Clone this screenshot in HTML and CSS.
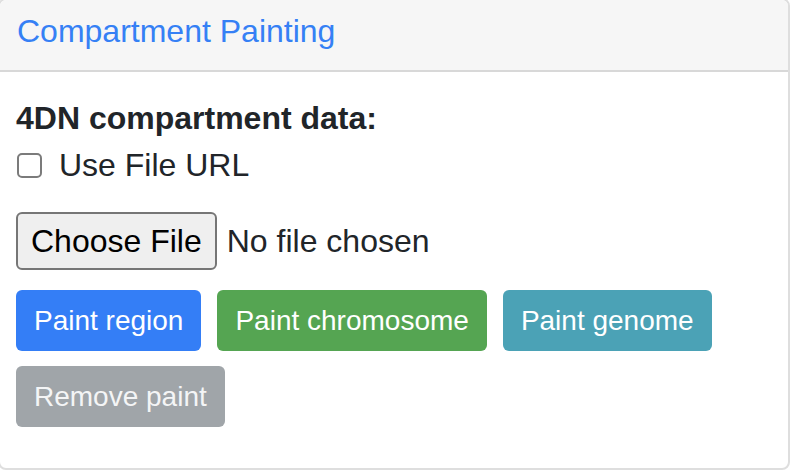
FILE: index.html
```html
<!DOCTYPE html>
<html lang="en">
<head>
<meta charset="utf-8">
<title>Compartment Painting</title>
<link rel="stylesheet" href="styles.css">
</head>
<body>
<div class="card">
  <div class="card-header">
    <h5 class="card-title">Compartment Painting</h5>
  </div>
  <div class="card-body">
    <div class="field-label">4DN compartment data:</div>
    <label class="check">
      <input type="checkbox" class="check-input">
      <span class="check-text">Use File URL</span>
    </label>
    <div class="file-row">
      <button type="button" class="file-btn">Choose File</button>
      <span class="file-status">No file chosen</span>
    </div>
    <div class="actions">
      <button type="button" class="btn btn-primary">Paint region</button>
      <button type="button" class="btn btn-success">Paint chromosome</button>
      <button type="button" class="btn btn-info">Paint genome</button>
      <button type="button" class="btn btn-secondary" disabled>Remove paint</button>
    </div>
  </div>
</div>
</body>
</html>
```

FILE: styles.css
```css
html, body {
  margin: 0;
  padding: 0;
}

body {
  width: 790px;
  height: 470px;
  overflow: hidden;
  background: #ffffff;
  font-family: "Liberation Sans", Arial, Helvetica, sans-serif;
  color: #212529;
}

.card {
  box-sizing: border-box;
  width: 792px;
  height: 472px;
  margin: -2px 0 0 -2px;
  border: 2px solid #dedede;
  border-radius: 8px;
  background: #ffffff;
  overflow: hidden;
}

.card-header {
  box-sizing: border-box;
  height: 72px;
  padding: 13px 16px 0 17px;
  background: #f6f6f6;
  border-bottom: 2px solid #d8d8d8;
}

.card-title {
  margin: 0;
  font-size: 32px;
  line-height: 36px;
  font-weight: normal;
  color: #3580f5;
}

.card-body {
  padding: 28px 16px 0 16px;
}

.field-label {
  font-size: 32px;
  line-height: 36px;
  font-weight: bold;
  color: #212529;
}

.check {
  display: flex;
  align-items: center;
  margin-top: 11px;
  font-size: 32px;
  line-height: 36px;
}

.check-input {
  appearance: none;
  -webkit-appearance: none;
  box-sizing: border-box;
  width: 25px;
  height: 25px;
  margin: 0 17px 0 1px;
  border: 2px solid #7b7b7b;
  border-radius: 5px;
  background: #ffffff;
}

.file-row {
  display: flex;
  align-items: center;
  gap: 10px;
  margin-top: 29px;
}

.file-btn {
  box-sizing: border-box;
  height: 58px;
  padding: 0 13px;
  font-family: inherit;
  font-size: 32px;
  line-height: 36px;
  color: #000000;
  background: #efefef;
  border: 2px solid #767676;
  border-radius: 6px;
}

.file-status {
  font-size: 32px;
  line-height: 36px;
  color: #212529;
}

.actions {
  display: flex;
  flex-wrap: wrap;
  gap: 15px 16px;
  margin-top: 20px;
}

.btn {
  box-sizing: border-box;
  height: 61px;
  padding: 0 18px;
  border: 0;
  border-radius: 6px;
  font-family: inherit;
  font-size: 28px;
  line-height: 61px;
  color: #ffffff;
}

.btn-primary {
  background: #347ef6;
}

.btn-success {
  background: #55a552;
}

.btn-info {
  background: #4ba2b6;
}

.btn-secondary {
  background: #a0a5a9;
  color: #f4f5f6;
}
```
